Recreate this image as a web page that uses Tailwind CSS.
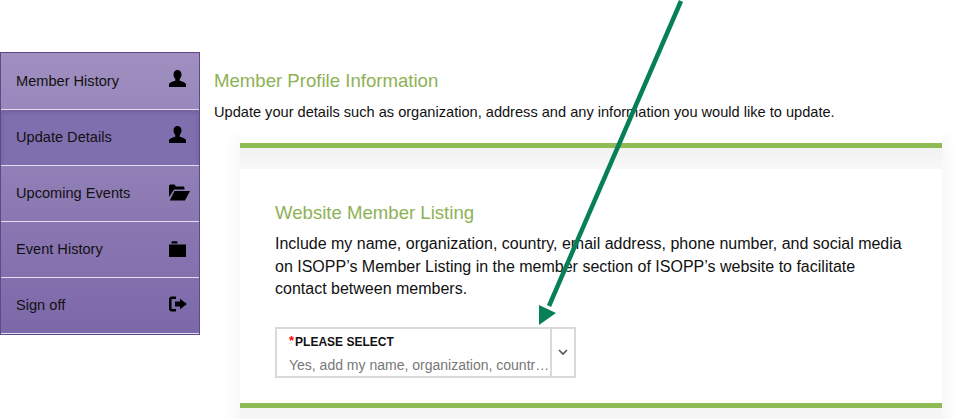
<!DOCTYPE html>
<html><head><meta charset="utf-8">
<script src="https://cdn.jsdelivr.net/npm/@tailwindcss/browser@4"></script>
</head>
<body class="bg-white">
<div class="relative w-[960px] h-[419px] overflow-hidden bg-white font-['Liberation_Sans',Arial,sans-serif] text-[#111]">
  <div class="flex pt-[52px] items-start">
    <nav class="w-[200px] h-[283px] shrink-0 flex flex-col border border-[#5d4a8c] pt-[1px] text-[14.6px] bg-linear-to-b from-[#a08fc0] to-[#7c68a8]">
      <a class="h-[56px] flex items-center justify-between pl-[15px] pr-[13px] border-b border-[#e4dff0] shrink-0">Member History
        <svg class="w-[17px] h-[17px] -mt-[6px]" viewBox="0 0 17 17"><path fill="#000" d="M8.500 0c2.400 0 4 1.900 4 4.500 0 1.900-.8 3.500-1.800 4.400v1.800c2.200.8 5.800 1.500 6.300 3.600V17H0v-2.700c.5-2.100 4.100-2.800 6.300-3.600V8.900c-1-.9-1.800-2.500-1.800-4.400C4.500 1.900 6.100 0 8.500 0z"/></svg></a>
      <a class="h-[56px] flex items-center justify-between pl-[15px] pr-[13px] border-b border-[#e4dff0] shrink-0 bg-[#806fae] shadow-[inset_0_2px_4px_rgba(60,40,100,0.25)]">Update Details
        <svg class="w-[17px] h-[17px] -mt-[6px]" viewBox="0 0 17 17"><path fill="#000" d="M8.500 0c2.400 0 4 1.900 4 4.500 0 1.900-.8 3.500-1.800 4.400v1.800c2.200.8 5.800 1.500 6.300 3.600V17H0v-2.700c.5-2.100 4.100-2.800 6.300-3.600V8.900c-1-.9-1.800-2.500-1.800-4.400C4.500 1.900 6.100 0 8.500 0z"/></svg></a>
      <a class="h-[56px] flex items-center justify-between pl-[15px] pr-[9px] border-b border-[#e4dff0] shrink-0">Upcoming Events
        <svg class="w-[21px] h-[17px] -mt-[3px]" viewBox="0 0 21 17"><path fill="#000" d="M0 2C0 1 .7.500 1.500.5h4l1.500 2h7c.8 0 1.500.6 1.500 1.500V5.500H5L0 13z"/><path fill="#000" d="M5.500 7H21l-5 9.500H.8z"/></svg></a>
      <a class="h-[56px] flex items-center justify-between pl-[15px] pr-[13px] border-b border-[#e4dff0] shrink-0">Event History
        <svg class="w-[17px] h-[16px] -mt-[2px]" viewBox="0 0 17 16"><path fill="#000" d="M0 3.500h17V16H0zM2.500 2.500V1.500C2.500.8 3 .3 3.700.3h3.600c.7 0 1.200.5 1.200 1.200v1z"/></svg></a>
      <a class="h-[56px] flex items-center justify-between pl-[15px] pr-[12px] border-b border-[#e4dff0] shrink-0">Sign off
        <svg class="w-[18px] h-[16px] -mt-[4px]" viewBox="0 0 18 16"><path fill="#000" d="M7 .5H3a3 3 0 0 0-3 3v9a3 3 0 0 0 3 3h4v-2.500H3.500a1 1 0 0 1-1-1V4a1 1 0 0 1 1-1H7z"/><path fill="#000" d="M6 5.500h5V2.800L18 8l-7 5.200v-2.700H6z"/></svg></a>
    </nav>
    <main class="flex-1 min-w-0 pl-[14px]">
      <h1 class="text-[18.6px] leading-[22px] text-[#8db255] mt-[18px]">Member Profile Information</h1>
      <p class="text-[14.6px] leading-[20px] mt-[10px]">Update your details such as organization, address and any information you would like to update.</p>
      <div class="overflow-hidden mt-[11px] h-[400px] pl-[26px] pr-[18px]">
        <section class="w-[702px] h-[400px] bg-white pt-[10px] shadow-[0_0_20px_rgba(0,0,0,0.06)]">
          <div class="h-[5px] bg-[#8fbb54]"></div>
          <div class="h-[21px] bg-linear-to-b from-[#f2f2f2] to-[#f8f8f8]"></div>
          <div class="bg-white h-[234px] pl-[35px] pt-[33px]">
            <h2 class="text-[18.6px] leading-[22px] text-[#8db255]">Website Member Listing</h2>
            <p class="w-[630px] text-[16px] leading-[22.5px] mt-[9px] text-[#111]">Include my name, organization, country, email address, phone number, and social media on ISOPP’s Member Listing in the member section of ISOPP’s website to facilitate contact between members.</p>
            <div class="mt-[26px] w-[301px] h-[51px] border-2 border-[#d9d9d9] flex">
              <div class="flex-1 min-w-0 pl-[12px]">
                <div class="text-[12px] leading-[14px] font-bold mt-[6px] text-[#111]"><span class="text-[#f00] text-[13px] relative -top-[1px] pr-[1px]">*</span>PLEASE SELECT</div>
                <div class="text-[14px] leading-[18px] mt-[7px] text-[#777] truncate">Yes, add my name, organization, country, email</div>
              </div>
              <div class="w-[24px] shrink-0 border-l-2 border-[#d9d9d9] flex items-center justify-center">
                <svg class="w-[10px] h-[7px]" viewBox="0 0 10 7"><path d="M1 1l4 4 4-4" fill="none" stroke="#555" stroke-width="1.600"/></svg>
              </div>
            </div>
          </div>
          <div class="h-[5px] bg-[#8fbb54]"></div>
          <div class="h-[60px] bg-[#f5f5f5]"></div>
        </section>
      </div>
    </main>
  </div>
  <svg class="absolute left-0 top-0 pointer-events-none" width="960" height="419" viewBox="0 0 960 419">
    <line x1="681" y1="1" x2="549" y2="306" stroke="#068059" stroke-width="4.500"/>
    <polygon fill="#068059" points="539,325 539,305 556,313"/>
  </svg>
</div>
</body></html>
